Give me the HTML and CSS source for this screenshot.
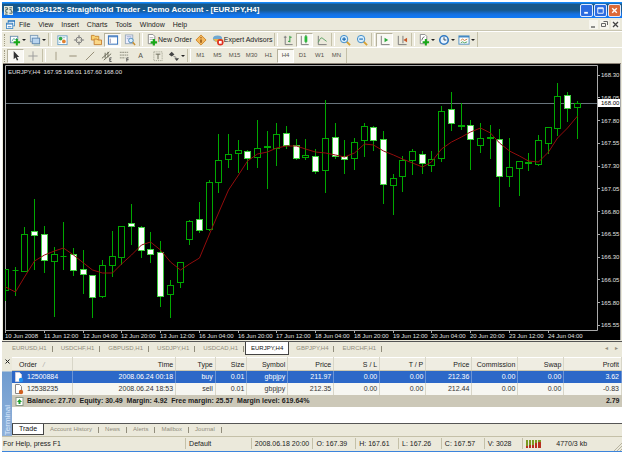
FILE: index.html
```html
<!DOCTYPE html>
<html lang="en">
<head>
<meta charset="utf-8">
<title>Straighthold Trader</title>
<link rel="stylesheet" href="styles.css">
</head>
<body>
<div class="window">
  <header class="titlebar">
    <svg class="ico" viewBox="0 0 10 10"><rect width="10" height="10" fill="#e8ece0"/><path d="M1 2h3v2H2v3h2M6 2h3M6 4h2v2h1v2H6M1 9h3" fill="none" stroke="#3d5a58"/></svg>
    <h1>1000384125: Straighthold Trader - Demo Account - [EURJPY,H4]</h1>
    <button class="win" aria-label="Minimize"><svg viewBox="0 0 11 12"><path d="M3 8.500h4" stroke="#fff" stroke-width="2"/></svg></button>
    <button class="win" aria-label="Restore"><svg viewBox="0 0 11 12"><path d="M2.500 3h6v6h-6zM2.500 4h6" fill="none" stroke="#fff"/></svg></button>
    <button class="win close" aria-label="Close"><svg viewBox="0 0 11 12"><path d="M3 3.500l5 5M8 3.500l-5 5" stroke="#fff" stroke-width="1.500"/></svg></button>
  </header>

  <nav class="menu">
    <svg class="ico" viewBox="0 0 10 10"><rect x="2.500" y=".5" width="7" height="6" fill="#fff" stroke="#4a90c8"/><path d="M2 1.500h8" stroke="#2a70b8"/><rect x=".5" y="3.500" width="7" height="6" fill="#fff" stroke="#4a90c8"/><path d="M0 4.500h8M2 7.500h4" stroke="#2a70b8"/></svg>
    <button>File</button><button>View</button><button>Insert</button><button>Charts</button><button>Tools</button><button>Window</button><button>Help</button>
    <span class="fill"></span>
    <button class="mdi" aria-label="Minimize chart"><svg viewBox="0 0 9 9"><path d="M2 7h4" stroke="#555" stroke-width="1.300"/></svg></button>
    <button class="mdi" aria-label="Restore chart"><svg viewBox="0 0 9 9"><path d="M3.500 1.500h4v3.500M1.500 3.500h4v3h-4z" fill="none" stroke="#666"/></svg></button>
    <button class="mdi" aria-label="Close chart"><svg viewBox="0 0 9 9"><path d="M2 2l5 5M7 2L2 7" stroke="#444" stroke-width="1.300"/></svg></button>
  </nav>

  <div class="bar">
    <span class="grip"></span>
    <button class="tool drop" aria-label="New chart"><svg viewBox="0 0 13 13"><rect x="1.500" y="2.500" width="8" height="7" fill="#fff" stroke="#6b8fae"/><path d="M3 8l2-3 2 1 2-2" stroke="#5a9" fill="none"/><path d="M8.500 5.500v7M5 9h7" stroke="#18a818" stroke-width="2.200"/></svg></button>
    <button class="tool drop" aria-label="Profiles"><svg viewBox="0 0 13 13"><rect x="1.500" y="1.500" width="8" height="7" fill="#dcecf8" stroke="#7f9db8"/><rect x="3.500" y="4.500" width="8" height="6" fill="#b8d4ee" stroke="#6088b0"/><path d="M5 12h7" stroke="#8aa" /></svg></button>
    <span class="sep"></span>
    <button class="tool" aria-label="Market watch"><svg viewBox="0 0 13 13"><rect x="2" y="2" width="10" height="9.500" fill="#fff" stroke="#6aa0c8"/><circle cx="5" cy="5" r="2" fill="#30a848"/><circle cx="8.500" cy="8" r="2" fill="#e08030"/><path d="M7 4h3M3 9h2" stroke="#9bc"/></svg></button>
    <button class="tool" aria-label="Data window"><svg viewBox="0 0 13 13"><circle cx="6.500" cy="6.500" r="3.200" fill="none" stroke="#777"/><path d="M6.500 1v4M6.500 8v4M1 6.500h4M8 6.500h4" stroke="#777"/></svg></button>
    <button class="tool" aria-label="Navigator"><svg viewBox="0 0 13 13"><path d="M1.500 1.500h3l1 1h4v4h-8z" fill="#f8d070" stroke="#c88830"/><path d="M4.500 5.500h3l1 1h4v5h-8z" fill="#fbd888" stroke="#c88030"/></svg></button>
    <button class="tool on" aria-label="Terminal"><svg viewBox="0 0 13 13"><rect x="1.500" y="2" width="10" height="9" fill="#fff" stroke="#2868b8"/><path d="M2 3h9" stroke="#2868b8"/><path d="M3.500 5v5" stroke="#88a"/></svg></button>
    <button class="tool" aria-label="Strategy tester"><svg viewBox="0 0 13 13"><rect x="1.500" y="1" width="8" height="9.500" fill="#eef" stroke="#9ab"/><path d="M3 3h5M3 5h2" stroke="#9ac"/><circle cx="7.500" cy="7" r="2.500" fill="#d8eefc" stroke="#4a88b8"/><path d="M9.500 9l2.500 3" stroke="#c89030" stroke-width="1.600"/></svg></button>
    <span class="sep"></span>
    <button class="tool wide"><svg viewBox="0 0 13 13"><path d="M2.500.5h5l2 2v8h-7z" fill="#fff" stroke="#888"/><path d="M4 4h4M4 6h4" stroke="#aaa"/><path d="M8.500 5.500v7M5 9h7" stroke="#18a818" stroke-width="2.400"/></svg>New Order</button>
    <button class="tool" aria-label="MetaEditor"><svg viewBox="0 0 13 13"><path d="M6.500 1L12 6.500 6.500 12 1 6.500z" fill="#f2b860" stroke="#d08828"/><path d="M6.500 3.500v1M6.500 6v3.500" stroke="#8a4a08" stroke-width="1.500"/></svg></button>
    <button class="tool wide"><svg viewBox="0 0 13 13"><ellipse cx="6" cy="5" rx="5" ry="3.500" fill="#70a8d0"/><path d="M1 5.500h11l-3 3H4z" fill="#e8b850"/><circle cx="9" cy="9" r="3.500" fill="#e03020"/><rect x="7.500" y="7.500" width="3" height="3" fill="#fff"/></svg>Expert Advisors</button>
    <span class="sep"></span>
    <button class="tool" aria-label="Bar chart"><svg viewBox="0 0 13 13"><path d="M3.500 2v9.500h8M2 3.500h3" fill="none" stroke="#777"/><path d="M8.500 2v7M8.500 3.500h2M6.500 8h2" stroke="#289838"/></svg></button>
    <button class="tool on" aria-label="Candlesticks"><svg viewBox="0 0 13 13"><path d="M2.500 2v9.500h8" fill="none" stroke="#777"/><path d="M7.500 1v9" stroke="#187828"/><rect x="6" y="2.500" width="3" height="6" fill="#28b838"/></svg></button>
    <button class="tool" aria-label="Line chart"><svg viewBox="0 0 13 13"><path d="M2.500 2v9.500h9" fill="none" stroke="#777"/><path d="M2.500 9q3-7 5-4l4 3" fill="none" stroke="#58a060"/></svg></button>
    <span class="sep"></span>
    <button class="tool" aria-label="Zoom in"><svg viewBox="0 0 13 13"><path d="M8 8l4 4" stroke="#d8a030" stroke-width="2"/><circle cx="5.500" cy="5.500" r="4" fill="#d8eefc" stroke="#3888c8"/><path d="M5.500 3.500v4M3.500 5.500h4" stroke="#1868b0" stroke-width="1.200"/></svg></button>
    <button class="tool" aria-label="Zoom out"><svg viewBox="0 0 13 13"><path d="M8 8l4 4" stroke="#d8a030" stroke-width="2"/><circle cx="5.500" cy="5.500" r="4" fill="#d8eefc" stroke="#3888c8"/><path d="M3.500 5.500h4" stroke="#1868b0" stroke-width="1.200"/></svg></button>
    <span class="sep"></span>
    <button class="tool on" aria-label="Auto scroll"><svg viewBox="0 0 13 13"><path d="M2.500 2v9.500h9" fill="none" stroke="#777"/><path d="M6 4l4 2.500L6 9z" fill="#28a838"/></svg></button>
    <button class="tool" aria-label="Chart shift"><svg viewBox="0 0 13 13"><path d="M2.500 2v9.500h9M7.500 2v8" fill="none" stroke="#777"/><path d="M12 4L8 6.500 12 9z" fill="#c85828"/></svg></button>
    <span class="sep"></span>
    <button class="tool drop" aria-label="Indicators"><svg viewBox="0 0 13 13"><path d="M2.500.5h5l2 2v8h-7z" fill="#fff" stroke="#888"/><path d="M4 7q1-4 3-4" stroke="#666" fill="none"/><path d="M8.500 5.500v7M5 9h7" stroke="#18a818" stroke-width="2.200"/></svg></button>
    <button class="tool drop" aria-label="Periods"><svg viewBox="0 0 13 13"><circle cx="6.500" cy="6.500" r="4.600" fill="#e8f4ff" stroke="#3078c0" stroke-width="1.700"/><path d="M6.500 3.500v3h2.500" fill="none" stroke="#345"/></svg></button>
    <button class="tool drop" aria-label="Templates"><svg viewBox="0 0 13 13"><rect x="1" y="2" width="11" height="9" fill="#fff" stroke="#5090c0"/><path d="M1 3h11" stroke="#3880c0" stroke-width="1.500"/><path d="M3 7l2-1.500L7 7l3-1.500" fill="none" stroke="#c87838"/><path d="M3 9.500l2-1 2 1 3-1" fill="none" stroke="#48a058"/></svg></button>
    <span class="end"></span>
  </div>

  <div class="bar second">
    <span class="grip"></span>
    <button class="tool on" aria-label="Cursor"><svg viewBox="0 0 13 13"><path d="M4 1v9l2-2 1.500 3.500 1.500-.7L7.500 7.500H10z" fill="#333"/></svg></button>
    <button class="tool" aria-label="Crosshair"><svg viewBox="0 0 13 13"><path d="M6.500 1.500v10M1.500 6.500h10" stroke="#999"/></svg></button>
    <span class="sep"></span>
    <button class="tool" aria-label="Vertical line"><svg viewBox="0 0 13 13"><path d="M6.500 2v9" stroke="#a09880"/></svg></button>
    <button class="tool" aria-label="Horizontal line"><svg viewBox="0 0 13 13"><path d="M2.500 6.500h8" stroke="#908870"/></svg></button>
    <button class="tool" aria-label="Trendline"><svg viewBox="0 0 13 13"><path d="M2 11l9-9" stroke="#908870"/></svg></button>
    <button class="tool" aria-label="Channel"><svg viewBox="0 0 13 13"><path d="M1 9l8-7M3 11l8-7M4.500 3v6M7.500 2v6" stroke="#665" /><path d="M11.500 8.500h-2v4h2M9.500 10.500h1.500" stroke="#555" fill="none"/></svg></button>
    <button class="tool" aria-label="Fibonacci"><svg viewBox="0 0 13 13"><path d="M2 2.500h9M2 5.500h9M2 8.500h6" stroke="#887" stroke-dasharray="2 .6"/><path d="M11.500 8.500h-2v4M9.500 10.500h2" stroke="#555" fill="none"/></svg></button>
    <button class="tool" aria-label="Text">A</button>
    <button class="tool" aria-label="Text label"><svg viewBox="0 0 13 13"><rect x="2" y="2" width="9" height="9.500" fill="none" stroke="#998" stroke-dasharray="1 1"/><path d="M4 4.500h5M6.500 4.500V10" stroke="#665"/></svg></button>
    <button class="tool drop" aria-label="Arrows"><svg viewBox="0 0 13 13"><path d="M1 5l3-3 3 3-3 2zM7 9h5l-2.500 3z" fill="#444"/><path d="M6 7l3 1" stroke="#777"/></svg></button>
    <span class="sep"></span>
    <button class="tool tf">M1</button><button class="tool tf">M5</button><button class="tool tf">M15</button><button class="tool tf">M30</button><button class="tool tf">H1</button><button class="tool tf on">H4</button><button class="tool tf">D1</button><button class="tool tf">W1</button><button class="tool tf">MN</button>
    <span class="end"></span>
  </div>

  <main class="chart"><svg id="chart" viewBox="3 64 618 276" role="img" aria-label="EURJPY H4 candlestick chart"></svg></main>

  <nav class="charttabs">
    <button>EURUSD,H1</button><button>USDCHF,H1</button><button>GBPUSD,H1</button><button>USDJPY,H1</button><button>USDCAD,H1</button><button class="active">EURJPY,H4</button><button>GBPJPY,H4</button><button>EURCHF,H1</button>
    <span class="fill"></span>
    <button class="scroll" aria-label="Scroll left">◂</button><button class="scroll" aria-label="Scroll right">▸</button>
  </nav>

  <section class="terminal">
    <aside class="side"><button aria-label="Close terminal"><svg viewBox="0 0 7 7"><path d="M1.500 1.500l4 4M5.500 1.500l-4 4" stroke="#222"/></svg></button><span>Terminal</span></aside>
    <div class="panel">
      <table>
        <colgroup><col class="c-order"><col class="c-time"><col class="c-type"><col class="c-size"><col class="c-symbol"><col class="c-num"><col class="c-num"><col class="c-num"><col class="c-num"><col class="c-num"><col class="c-num"><col></colgroup>
        <thead><tr><th>Order <i>/</i></th><th>Time</th><th>Type</th><th>Size</th><th>Symbol</th><th>Price</th><th>S / L</th><th>T / P</th><th>Price</th><th>Commission</th><th>Swap</th><th>Profit</th></tr></thead>
        <tbody>
          <tr class="selected"><td><svg viewBox="0 0 10 11"><path d="M1.500.5h4l2 2v7h-6z" fill="#fff" stroke="#ccd"/><circle cx="7" cy="8" r="2.200" fill="#2090f0"/></svg>12500884</td><td>2008.06.24 00:18</td><td>buy</td><td>0.01</td><td>gbpjpy</td><td>211.97</td><td>0.00</td><td>0.00</td><td>212.36</td><td>0.00</td><td>0.00</td><td>3.62</td></tr>
          <tr><td><svg viewBox="0 0 10 11"><path d="M1.500.5h4l2 2v7h-6z" fill="#fff" stroke="#888"/><circle cx="7" cy="8" r="2.200" fill="#d06020"/></svg>12538235</td><td>2008.06.24 18:53</td><td>sell</td><td>0.01</td><td>gbpjpy</td><td>212.35</td><td>0.00</td><td>0.00</td><td>212.44</td><td>0.00</td><td>0.00</td><td>-0.83</td></tr>
          <tr class="total"><td colspan="11"><svg viewBox="0 0 10 11"><rect x="2" y="1.500" width="7" height="8" fill="#fff" stroke="#8a9a88"/><path d="M5.500 3L8 6H6.500v2h-2V6H3z" fill="#20a030"/></svg>Balance: 27.70&nbsp; Equity: 30.49&nbsp; Margin: 4.92&nbsp; Free margin: 25.57&nbsp; Margin level: 619.64%</td><td>2.79</td></tr>
        </tbody>
      </table>
      <nav class="termtabs"><button class="active">Trade</button><button>Account History</button><button>News</button><button>Alerts</button><button>Mailbox</button><button>Journal</button></nav>
    </div>
  </section>

  <footer class="status">
    <span>For Help, press F1</span><span>Default</span><span>2008.06.18 20:00</span><span>O: 167.39</span><span>H: 167.61</span><span>L: 167.26</span><span>C: 167.57</span><span>V: 3028</span>
    <span class="conn"><svg viewBox="0 0 15 8"><path d="M0 0h2v8H0zM3 0h2v8H3zM6 0h2v8H6zM9 0h2v8H9zM12 0h3v8h-3z" fill="#7a9a20"/><path d="M0 6h2v2H0zM3 5h2v3H3zM6 5h2v3H6zM9 3h2v5H9zM12 2h3v6h-3z" fill="#b83020"/></svg></span>
    <span>4770/3 kb</span>
    <svg class="corner" viewBox="0 0 9 9"><path d="M1 9l8-8M4 9l5-5M7 9l2-2" stroke="#b8b4a0"/></svg>
  </footer>
</div>
<script src="chart.js"></script>
</body>
</html>
```
FILE: styles.css
```css
* { box-sizing: border-box; }
body { margin: 0; background: #fff; font: 7px/9px "Liberation Sans", Arial, sans-serif; color: #222; }
button { font: inherit; color: inherit; background: none; border: 0; padding: 0; margin: 0; }
svg { display: block; flex: none; }
.window { margin: 2px 3px 0 2px; background: #ebe9db; border-bottom: 2px solid #3c84dc; min-height: calc(100vh - 2px); }
.fill { flex: 1; }
.ico { width: 9px; height: 9px; }

.titlebar { display: flex; align-items: center; gap: 1px; height: 16px; padding: 0 1px 0 2px; background: linear-gradient(#1488f8 0 1px, #17588a 2px, #17588a 8px, #1470e0 12px, #107af8); }
.titlebar h1 { flex: 1; margin: 0 0 0 3px; font: bold 8px/12px "Liberation Sans", Arial, sans-serif; color: #fff; white-space: nowrap; }
.win { width: 13px; height: 13px; border: 1px solid #dfeaff; border-radius: 2px; background: #2c6ce0; }
.win svg { width: 11px; height: 11px; }
.win.close { background: #dc6a38; }

.menu { display: flex; align-items: center; height: 13px; padding: 0 2px 0 4px; border-bottom: 1px solid #c9c6b2; }
.menu button { margin-left: 8px; }
.menu .ico + button { margin-left: 4px; }
.menu .mdi { margin-left: 2px; width: 9px; background: #f6f5ee; }

.bar { display: flex; align-items: center; height: 16px; padding: 1px 2px; border-top: 1px solid #fff; }
.grip { width: 3px; height: 12px; border-left: 1px dotted #a09c84; }
.tool { display: flex; align-items: center; justify-content: center; width: 17px; height: 14px; flex: none; white-space: nowrap; }
.tool svg { width: 12px; height: 12px; }
.tool.on { background: #f9f8f3; border: 1px solid; border-color: #b5b19c #fff #fff #b5b19c; }
.tool.drop { width: 20px; gap: 1px; }
.tool.drop::after { content: ""; border: 2px solid transparent; border-top-color: #222; border-bottom: 0; }
.tool.wide { width: auto; padding: 0 1px 0 2px; }
.sep { width: 4px; height: 13px; border-left: 1px solid #c4c0a8; border-right: 1px solid #fff; margin: 0 1px; }
.end { width: 2px; height: 15px; border-right: 1px solid #c4c0a8; }
.second { color: #55524a; }
.tf { font-size: 6px; }

.chart { margin: 0 1px; border-top: 1px solid #8d8478; background: #000; }
.chart svg { width: 100%; height: auto; }
.chart text { font: 6px "Liberation Sans", Arial, sans-serif; fill: #e0e0e0; }
.chart .axis { stroke: #aaa; fill: none; }
.chart .quote { stroke: #68747c; }
.chart .up, .chart .wick { stroke: #00a800; fill: #000; }
.chart .down { stroke: #40d040; fill: #fff; }
.chart .average { stroke: #920c0c; fill: none; }
.chart .tag { fill: #fff; }
.chart .now { fill: #000; }

.charttabs { display: flex; height: 16px; margin-top: 1px; padding-left: 3px; border-top: 1px solid #555; color: #918d7c; font-size: 6px; }
.charttabs button { height: 13px; padding: 0 6px 0 7px; border-right: 1px solid transparent; background: linear-gradient(#918d7c, #918d7c) right 4px / 1px 6px no-repeat; }
.charttabs .active { background: #fff; color: #111; border: 1px solid #444; border-top: 0; padding: 0 5px; }
.charttabs .scroll { background: none; padding: 0 3px; }

.terminal { display: flex; }
.side { display: flex; flex-direction: column; justify-content: space-between; align-items: center; width: 10px; background: linear-gradient(#ebe9db 0 14px, #6f9cd0 15px, #8fb0d8); color: #dceaff; }
.side button { width: 7px; padding-top: 1px; }
.side span { writing-mode: vertical-rl; transform: rotate(180deg); font-size: 8px; }
.panel { flex: 1; min-width: 0; background: #fff; }
table { width: 100%; table-layout: fixed; border-collapse: collapse; }
.c-order { width: 60px; } .c-time { width: 17%; } .c-type { width: 6.5%; } .c-size { width: 5.2%; } .c-symbol { width: 6.7%; } .c-num { width: 7.55%; }
th, td { height: 12px; padding: 0 2px; font-weight: normal; text-align: right; white-space: nowrap; border-right: 1px solid #d8d6c8; }
th { height: 13px; background: #efede2; border-top: 1px solid #fff; border-bottom: 1px solid #cbc7b0; }
th i { color: #aaa; padding-left: 4px; }
th:first-child { text-align: left; padding-left: 7px; }
td:first-child { text-align: left; }
td svg { display: inline-block; width: 10px; height: 11px; margin: -1px 3px -1px 0; vertical-align: -3px; }
td { color: #333; background: #f6f6f1; }
.selected td { color: #fff; background: #2c68c8; border-color: #6c94d4; }
.total td { font-weight: bold; color: #222; background: #ccc8b8; border: 0; }
.termtabs { display: flex; height: 13px; margin-top: 16px; border-top: 1px solid #555; background: #ebe9db; color: #918d7c; font-size: 6px; }
.termtabs button { height: 11px; padding: 0 7px 0 6px; background: linear-gradient(#918d7c, #918d7c) right 3px / 1px 6px no-repeat; }
.termtabs .active { background: #fff; color: #111; border: 1px solid #444; border-top: 0; padding: 0 6px; font-size: 7px; }

.status { display: grid; grid-template-columns: 184fr 66fr 62fr 43fr 43fr 43fr 43fr 39fr 27fr 64fr 9px; align-items: center; height: 15px; border-top: 1px solid #c4c0a8; }
.status span { padding-left: 3px; height: 11px; line-height: 11px; border-left: 1px solid #c4c0a8; white-space: nowrap; }
.status span:first-child { border: 0; padding-left: 1px; }
.status .conn { padding-top: 2px; }
.status .conn + span { border: 0; padding-left: 7px; }
.conn svg { width: 15px; height: 8px; }
.corner { width: 9px; height: 9px; align-self: end; }
```
FILE: chart.js
```js
// Each candle: high, body top, body bottom, low, 1 = filled, moving average.
const candles = [
  [269,269,290,301,0,287],[267,270,270,296,0,292],[227,234,271,272,0,277],[199,231,235,270,1,261],
  [226,234,260,273,1,255],[247,254,261,317,0,251],[222,256,256,270,0,248],[248,254,270,276,1,255],
  [250,269,274,294,1,263],[275,275,297,318,1,270],[260,265,296,298,0,273],[231,256,265,277,0,273],
  [226,226,257,265,0,264],[204,223,226,245,1,255],[226,227,250,258,1,245],[232,249,254,263,1,242],
  [241,252,296,307,1,250],[280,285,294,318,0,262],[262,262,282,288,0,270],[220,221,239,245,0,264],
  [202,219,230,233,1,258],[180,182,229,231,0,234],[134,160,182,193,0,213],[134,154,159,168,0,190],
  [140,150,153,173,0,175],[150,151,158,170,1,161],[120,148,157,168,0,154],[131,146,147,189,0,152],
  [123,134,148,166,0,148],[126,133,145,149,1,146],[139,145,158,160,1,146],[139,155,157,160,0,149],
  [149,156,171,174,1,152],[100,138,170,193,0,153],[123,137,156,159,1,155],[140,156,159,174,1,157],
  [138,142,158,170,0,153],[123,126,140,157,0,144],[126,127,140,151,1,145],[131,139,184,204,1,151],
  [174,178,185,215,0,155],[156,160,176,192,0,159],[149,151,160,175,0,163],[151,154,163,174,1,167],
  [151,159,165,172,0,162],[106,111,158,162,0,149],[92,109,123,131,1,142],[103,125,126,130,0,137],
  [120,125,139,170,1,132],[123,138,145,153,0,128],[125,137,138,159,0,133],[129,139,176,207,1,143],
  [138,167,176,187,0,151],[161,161,168,196,0,156],[153,162,163,171,0,161],[135,140,164,166,0,162],
  [127,127,143,154,0,152],[83,96,128,136,0,138],[92,95,108,122,1,128],[101,103,107,139,0,116]
];
const dates = ["10 Jun 2008","11 Jun 12:00","12 Jun 04:00","12 Jun 20:00","13 Jun 12:00","16 Jun 04:00","16 Jun 20:00","17 Jun 12:00","18 Jun 04:00","18 Jun 20:00","19 Jun 12:00","20 Jun 04:00","20 Jun 20:00","23 Jun 12:00","24 Jun 04:00"];
const x = i => Math.floor(5.6 + i * 9.69) + 0.5;

let out = '<path class="axis" d="M5.5 330V65.5H597.5V330.5H5.5M620.5 64V340"/>';
out += '<path class="quote" d="M6 103.500H597"/>';
candles.forEach(([high, top, bottom, low, filled], i) => {
  const c = x(i);
  const left = Math.max(c - 3, 5.5);
  out += `<path class="wick" d="M${c} ${high}V${low}"/>`;
  out += top === bottom
    ? `<path class="wick" d="M${left} ${top + 0.5}H${c + 3}"/>`
    : `<rect class="${filled ? "down" : "up"}" x="${left}" y="${top + 0.5}" width="${c + 3 - left}" height="${bottom - top}"/>`;
});
out += `<polyline class="average" points="${candles.map((c, i) => x(i) + "," + c[5]).join(" ")}"/>`;
for (let i = 0; i < 12; i++) {
  const y = 75 + i * 22.75;
  out += `<path class="axis" d="M598 ${Math.floor(y) + 0.5}h2"/><text x="601" y="${Math.round(y) + 2}">${(168.3 - i * 0.25).toFixed(2)}</text>`;
}
dates.forEach((d, i) => {
  const left = Math.round(5 + i * 38.77);
  out += `<path class="axis" d="M${left + 0.5} 330v3"/><text x="${left}" y="338">${d}</text>`;
});
out += '<rect class="tag" x="598" y="99" width="22" height="8"/><text class="now" x="601" y="105">168.00</text>';
out += '<text x="8" y="74">EURJPY,H4&#160; 167.95 168.01 167.60 168.00</text>';
document.getElementById("chart").innerHTML = out;
```
